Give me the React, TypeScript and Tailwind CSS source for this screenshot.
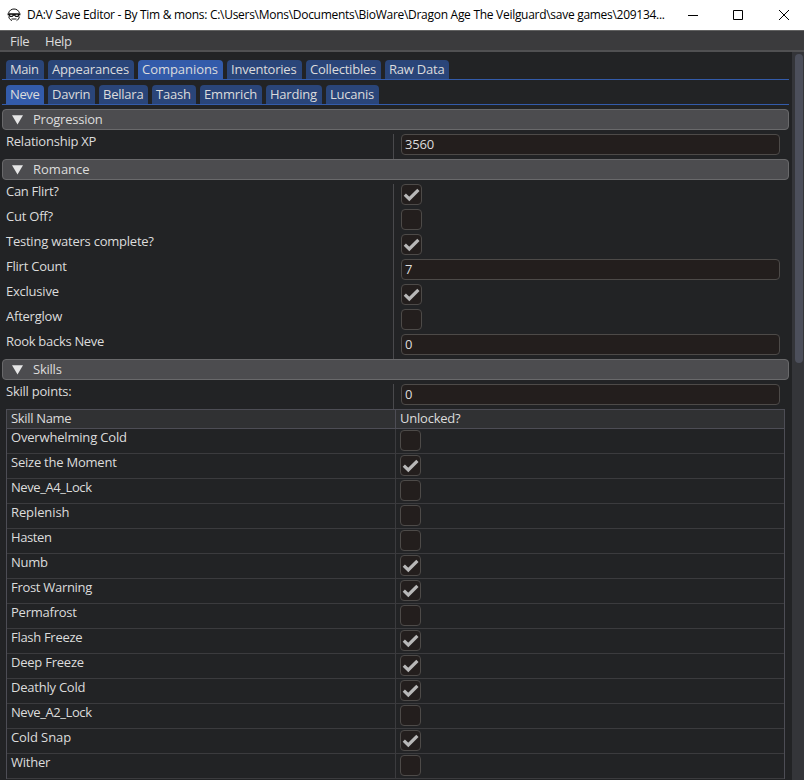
import React from "react";

const tightness: Record<string, string> = {
  Companions: "tracking-[-0.05px]",
  Romance: "tracking-[0px]",
  Replenish: "tracking-[-0.1px]",
  "Cold Snap": "tracking-[-0.1px]",
  Emmrich: "tracking-[-0.15px]",
  Appearances: "tracking-[-0.17px]",
  Main: "tracking-[-0.4px]",
  Neve: "tracking-[-0.4px]",
  Hasten: "tracking-[-0.4px]",
  "Can Flirt?": "tracking-[-0.3px]",
  "Rook backs Neve": "tracking-[-0.3px]",
  "Skill Name": "tracking-[-0.33px]",
  "Frost Warning": "tracking-[-0.3px]",
  "Flash Freeze": "tracking-[-0.3px]",
  "Seize the Moment": "tracking-[-0.23px]",
  "Overwhelming Cold": "tracking-[-0.18px]",
  "Neve_A4_Lock": "tracking-[-0.42px]",
  "Neve_A2_Lock": "tracking-[-0.42px]",
};

function Label({ text }: { text: string }) {
  return <span className={tightness[text] ?? "tracking-[-0.23px]"}>{text}</span>;
}

function Tab({ label, width, active }: { label: string; width: number; active?: boolean }) {
  return (
    <div
      className={`h-[19px] shrink-0 rounded-t-[4px] pl-1 leading-[19px] ${active ? "bg-[#335baa]" : "bg-[#2a4579]"}`}
      style={{ width }}
    >
      <Label text={label} />
    </div>
  );
}

function TabBar({ tabs, active }: { tabs: [string, number][]; active: string }) {
  return (
    <div className="ml-0.5 flex h-5 w-[787px] gap-1 border-b border-[#335baa] pl-1">
      {tabs.map(([label, width]) => (
        <Tab key={label} label={label} width={width} active={label === active} />
      ))}
    </div>
  );
}

function Header({ label }: { label: string }) {
  return (
    <div className="ml-0.5 flex h-[21px] w-[787px] items-center rounded-[4px] border border-[#69696b] bg-[#4c4c4f] pl-[9px] leading-[19px]">
      <svg width="12" height="10" viewBox="0 0 12 10" className="mr-[9px]">
        <path d="M0 0.2H11L5.5 9.4Z" fill="#e6e6e6" />
      </svg>
      <Label text={label} />
    </div>
  );
}

function Check({ on }: { on: boolean }) {
  return (
    <div className="size-[21px] rounded-[4px] border border-[#4d4a48] bg-[#231e1d]">
      {on && (
        <svg width="19" height="19" viewBox="0 0 19 19">
          <path d="M2.8 9.6L7.3 14L16.4 4.9" fill="none" stroke="#b8b8b8" strokeWidth="3.2" />
        </svg>
      )}
    </div>
  );
}

function Field({ value }: { value: string }) {
  return (
    <div className="h-[21px] w-[379px] rounded-[4px] border border-[#4d4a48] bg-[#231e1d] pl-[3px] leading-[19px] tracking-[-0.2px]">
      {value}
    </div>
  );
}

function Row({ label, value }: { label: string; value: string | boolean }) {
  return (
    <div className="flex h-[25px] pl-1.5">
      <div className="w-[388px] border-r border-[#49494c] leading-[15px]">
        <Label text={label} />
      </div>
      <div className="pl-[7px]">
        {typeof value === "string" ? <Field value={value} /> : <Check on={value} />}
      </div>
    </div>
  );
}

const mainTabs: [string, number][] = [
  ["Main", 38], ["Appearances", 86], ["Companions", 85], ["Inventories", 75], ["Collectibles", 75], ["Raw Data", 64],
];
const companions: [string, number][] = [
  ["Neve", 38], ["Davrin", 47], ["Bellara", 49], ["Taash", 44], ["Emmrich", 62], ["Harding", 56], ["Lucanis", 53],
];
const romance: [string, string | boolean][] = [
  ["Can Flirt?", true], ["Cut Off?", false], ["Testing waters complete?", true], ["Flirt Count", "7"],
  ["Exclusive", true], ["Afterglow", false], ["Rook backs Neve", "0"],
];
const skills: [string, boolean][] = [
  ["Overwhelming Cold", false], ["Seize the Moment", true], ["Neve_A4_Lock", false], ["Replenish", false],
  ["Hasten", false], ["Numb", true], ["Frost Warning", true], ["Permafrost", false], ["Flash Freeze", true],
  ["Deep Freeze", true], ["Deathly Cold", true], ["Neve_A2_Lock", false], ["Cold Snap", true], ["Wither", false],
];

export default function App() {
  return (
    <div className="flex h-[780px] w-[804px] flex-col overflow-hidden whitespace-nowrap bg-[#222325] font-['Open_Sans','Noto_Sans',sans-serif] text-[13px] text-[#dcdcdc]">
      <div className="flex h-[30px] shrink-0 items-center bg-white text-black">
        <svg width="14" height="14" viewBox="0 0 14 14" className="ml-[7px] mr-[6px]" fill="none" stroke="#111">
          <path d="M1.6 5C2.4 2.4 4.4 1 7 1s4.6 1.4 5.4 4M1.6 8.6C2.4 11.4 4 12.2 5 12.6M12.4 8.6C12 10.6 11 12 9.6 12.6" />
          <path d="M.6 5.3h12.8v1.9h-1l-1 1.8H8.6L7 7.6 5.4 9H2.6l-1-1.8h-1Z" fill="#111" stroke="none" />
          <path d="M3.2 7.3h2.2M8.6 7.3h2.2" stroke="#fff" />
          <path d="M4.5 11h5" />
        </svg>
        <span className="w-[640px] text-[12px] leading-[30px] tracking-[-0.285px]">
          DA:V Save Editor - By Tim &amp; mons: C:\Users\Mons\Documents\BioWare\Dragon Age The Veilguard\save games\209134...
        </span>
        <svg width="104" height="12" viewBox="0 0 104 12" className="ml-[20px] shrink-0" fill="none" stroke="#000">
          <path d="M1 6.5h10M46.5 1.5h9v9h-9zM92 1l10 10M102 1L92 11" />
        </svg>
      </div>
      <div className="flex h-[22px] shrink-0 border-b-2 border-t border-b-[#505052] border-t-[#626262] bg-[#3b3b3d] pl-2.5 leading-[20px]">
        <span className="w-[35px] tracking-[-0.3px]">File</span>
        <span className="tracking-[-0.4px]">Help</span>
      </div>
      <div className="flex min-h-0 flex-1">
        <div className="w-[792px] overflow-hidden pt-2">
          <TabBar tabs={mainTabs} active="Companions" />
          <div className="h-[5px]" />
          <TabBar tabs={companions} active="Neve" />
          <div className="h-1" />
          <Header label="Progression" />
          <div className="h-[29px] pt-1">
            <Row label="Relationship XP" value="3560" />
          </div>
          <Header label="Romance" />
          <div className="pt-1">
            {romance.map(([l, v]) => <Row key={l} label={l} value={v} />)}
          </div>
          <Header label="Skills" />
          <div className="pt-1">
            <Row label="Skill points:" value="0" />
          </div>
          <div className="ml-1.5 w-[779px] border border-b-0 border-[#4d4d55]">
            <div className="flex h-[19px] border-b border-[#4d4d55] bg-[#303133] leading-[17px]">
              <div className="w-[389px] border-r border-[#4d4d55] pl-1"><Label text="Skill Name" /></div>
              <div className="pl-1"><Label text="Unlocked?" /></div>
            </div>
            {skills.map(([l, on]) => (
              <div key={l} className="flex h-[25px] border-b border-[#3b3b3e]">
                <div className="w-[389px] border-r border-[#3b3b3e] pl-1 leading-[17px]"><Label text={l} /></div>
                <div className="pl-1 pt-px"><Check on={on} /></div>
              </div>
            ))}
          </div>
        </div>
        <div className="w-3 bg-[#343539] pl-[3px] pt-0.5">
          <div className="h-[309px] w-2 rounded-full bg-[#4c4f5b]" />
        </div>
      </div>
    </div>
  );
}
